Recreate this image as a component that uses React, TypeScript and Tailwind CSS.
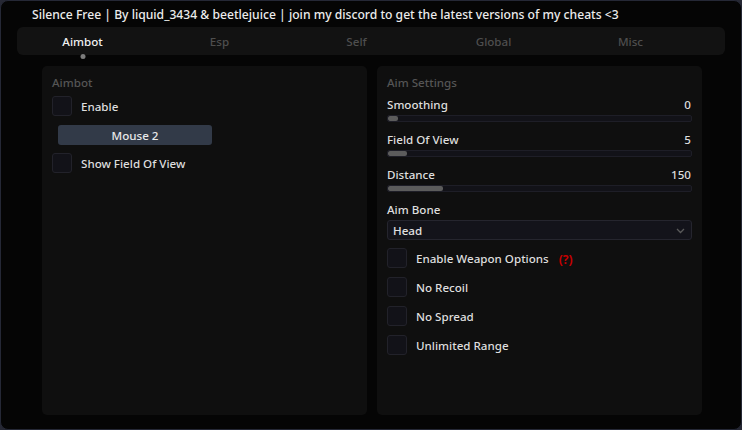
import React from 'react'

const font = { fontFamily: '"Noto Sans", sans-serif' }

const tabs = ['Aimbot', 'Esp', 'Self', 'Global', 'Misc']

const Checkbox: React.FC<{ label: string; extra?: React.ReactNode }> = ({ label, extra }) => (
  <div className="flex items-center h-[20px]">
    <div className="w-[20px] h-[20px] rounded-[3px] bg-[#121218] border border-[#22222a]" />
    <span className="ml-[9px] pt-[2px] text-[11.6px] font-medium text-[#dedede]">{label}</span>
    {extra}
  </div>
)

const Slider: React.FC<{ label: string; value: string; fill: number }> = ({ label, value, fill }) => (
  <div className="flex flex-col">
    <div className="flex justify-between h-[16px] items-center pt-[2px] text-[11.6px] font-medium text-[#dedede] pr-[1px]">
      <span>{label}</span>
      <span>{value}</span>
    </div>
    <div className="mt-[3px] h-[7px] rounded-[2px] bg-[#121218] border border-[#1e1e27] relative overflow-hidden">
      <div className="h-full bg-[#5c5c5c] rounded-[2px]" style={{ width: fill }} />
    </div>
  </div>
)

const App: React.FC = () => {
  return (
    <div className="w-[742px] h-[430px] bg-[#262834]" style={font}>
      <div className="w-full h-full rounded-[8px] border border-[#252836] bg-[#050505] flex flex-col overflow-hidden">
        <div className="h-[22px] pl-[31px] pt-[6px] text-[12.15px] font-medium text-[#ececec] leading-[16px] whitespace-nowrap">
          Silence Free | By liquid_3434 &amp; beetlejuice | join my discord to get the latest versions of my cheats &lt;3
        </div>

        <div className="mx-[16px] mt-[4px] h-[28px] rounded-[6px] bg-[#121212] flex">
          <div className="flex -ml-[3px]">
            {tabs.map((t, i) => (
              <div key={t} className="relative w-[137px] flex items-center justify-center pt-[1px]">
                <span className={i === 0 ? 'text-[11.6px] font-medium text-[#f0f0f0]' : 'text-[11.6px] font-medium text-[#4e4e4e]'}>{t}</span>
                {i === 0 && (
                  <div className="absolute left-1/2 -translate-x-1/2 -bottom-[4px] w-[5px] h-[5px] rounded-full bg-[#7c7c7c]" />
                )}
              </div>
            ))}
          </div>
        </div>

        <div className="flex gap-[10px] pl-[41px] mt-[11px]">
          <div className="w-[325px] h-[349px] rounded-[5px] bg-[#0f0f0f] px-[10px] pt-[8px]">
            <div className="h-[16px] flex items-center pt-[2px] text-[11.6px] font-medium text-[#555555]">Aimbot</div>
            <div className="mt-[6px] flex flex-col gap-[9px]">
              <Checkbox label="Enable" />
              <div className="ml-[6px] w-[154px] h-[20px] rounded-[3px] bg-[#323a48] flex items-center justify-center pt-[1px] text-[11.6px] font-medium text-[#e8e8e8]">
                Mouse 2
              </div>
              <div className="-mt-[1px]">
                <Checkbox label="Show Field Of View" />
              </div>
            </div>
          </div>

          <div className="w-[325px] h-[349px] rounded-[5px] bg-[#0f0f0f] px-[10px] pt-[8px]">
            <div className="h-[16px] flex items-center pt-[2px] text-[11.6px] font-medium text-[#555555]">Aim Settings</div>
            <div className="mt-[6px] flex flex-col gap-[9px]">
              <Slider label="Smoothing" value="0" fill={10} />
              <Slider label="Field Of View" value="5" fill={19} />
              <Slider label="Distance" value="150" fill={55} />
              <div className="flex flex-col">
                <div className="h-[16px] flex items-center pt-[2px] text-[11.6px] font-medium text-[#dedede]">Aim Bone</div>
                <div className="mt-[3px] h-[20px] rounded-[3px] bg-[#13131a] border border-[#25252e] flex items-center justify-between pl-[5px] pr-[6px] pt-[1px] text-[11.6px] font-medium text-[#e0e0e0]">
                  <span>Head</span>
                  <svg width="9" height="6" viewBox="0 0 9 6" fill="none">
                    <path d="M1 1l3.5 3.5L8 1" stroke="#5a5a5a" strokeWidth="1.3" />
                  </svg>
                </div>
              </div>
            </div>
            <div className="mt-[8px] flex flex-col gap-[9px]">
              <Checkbox label="Enable Weapon Options" extra={<span className="ml-[10px] pt-[3px] text-[12px] font-bold text-[#c40000]">(?)</span>} />
              <Checkbox label="No Recoil" />
              <Checkbox label="No Spread" />
              <Checkbox label="Unlimited Range" />
            </div>
          </div>
        </div>
      </div>
    </div>
  )
}

export default App
